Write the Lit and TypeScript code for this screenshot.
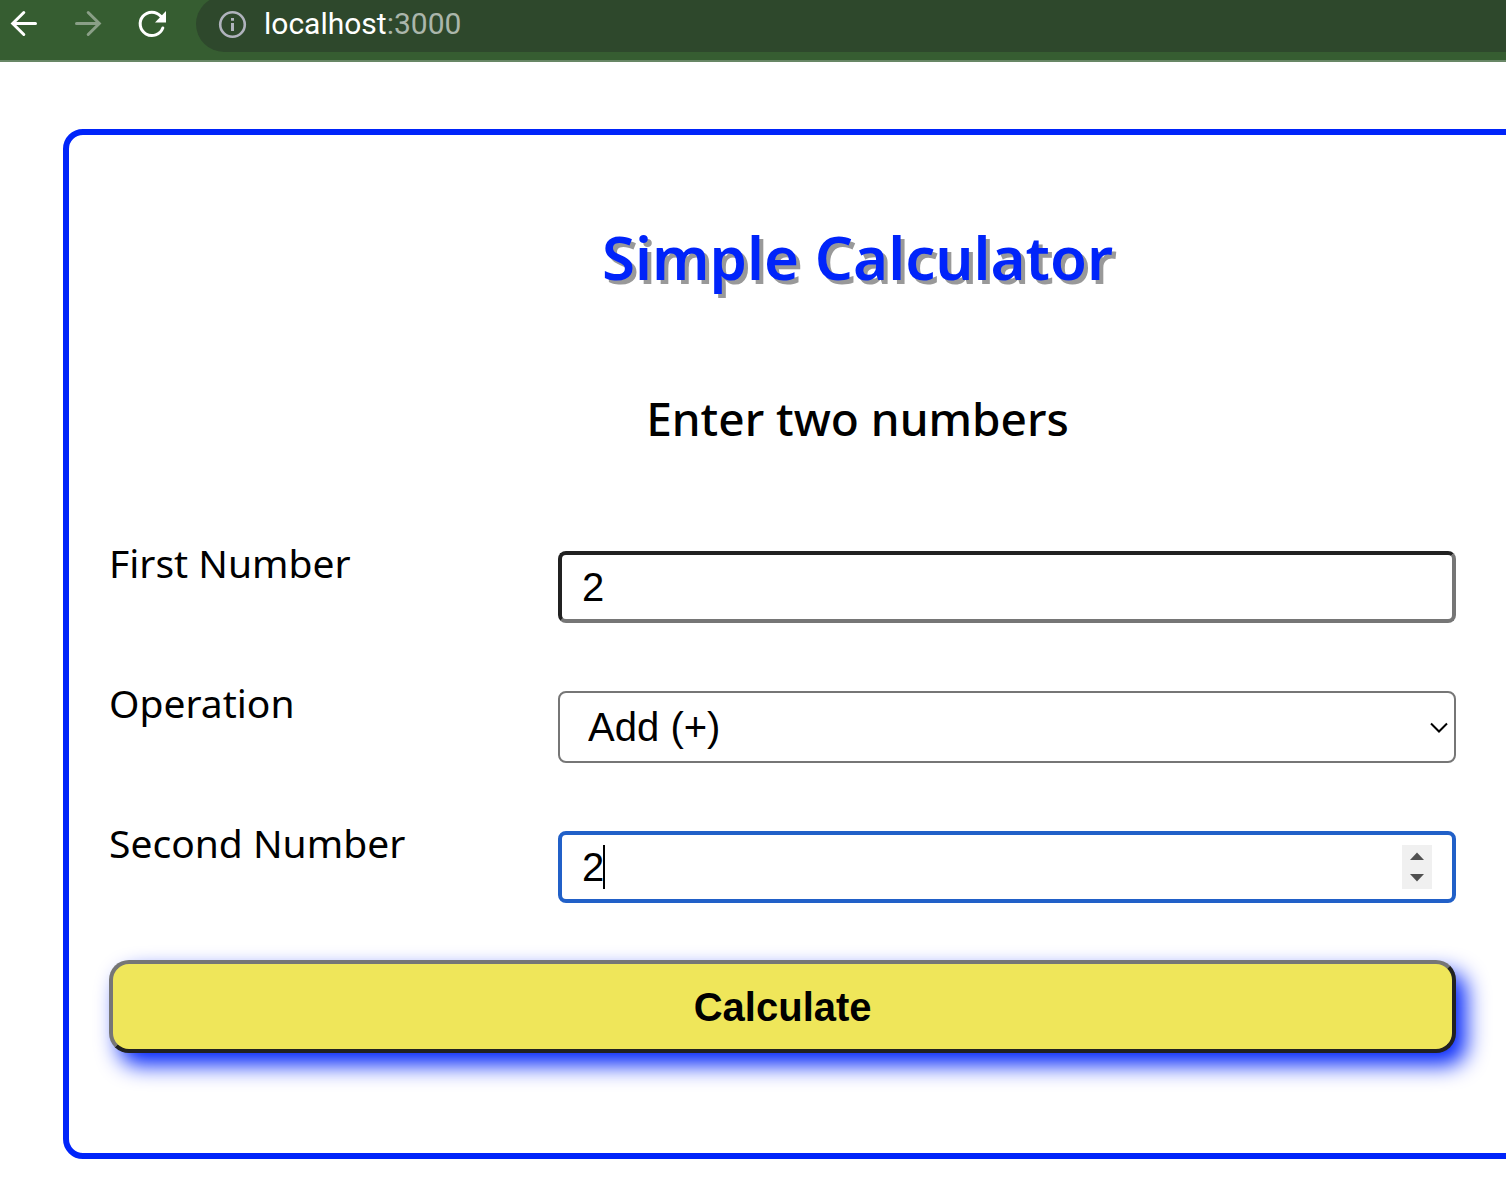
import { LitElement, html, css } from "lit";
import { customElement, state } from "lit/decorators.js";

@customElement("browser-bar")
class BrowserBar extends LitElement {
  static styles = css`
    :host {
      display: block;
    }
    .bar {
      display: flex;
      align-items: flex-start;
      height: 60px;
      overflow: hidden;
      background: #365d31;
      border-bottom: 2px solid #688766;
      box-sizing: content-box;
    }
    .nav {
      display: flex;
      flex: none;
      gap: 16px;
      width: 196px;
    }
    .nav-button {
      display: block;
      width: 48px;
      height: 48px;
      padding: 0;
      border: 0;
      background: none;
      color: #fff;
    }
    .nav-button:disabled {
      color: #8a9f87;
    }
    .icon {
      display: block;
      width: 48px;
      height: 48px;
    }
    .address {
      display: flex;
      flex: 1;
      align-items: center;
      gap: 16px;
      box-sizing: border-box;
      height: 56px;
      margin-top: -4px;
      padding-left: 20px;
      border-radius: 28px 0 0 28px;
      background: #2e482c;
    }
    .info {
      display: block;
      flex: none;
      width: 32px;
      height: 32px;
    }
    .url {
      color: #fff;
      font: 30px/32px Roboto, "Liberation Sans", sans-serif;
      text-decoration: none;
    }
    .port {
      color: #abb6ab;
    }
  `;

  render() {
    return html`
      <header class="bar">
        <nav class="nav" aria-label="History">
          <button class="nav-button" type="button" aria-label="Back">
            <svg class="icon" viewBox="0 0 48 48" fill="none" stroke="currentColor" stroke-width="3" stroke-linecap="round">
              <path d="M35.500 23.500H13M23.800 12.500L12.700 23.500L23.800 34.500" />
            </svg>
          </button>
          <button class="nav-button" type="button" aria-label="Forward" disabled>
            <svg class="icon" viewBox="0 0 48 48" fill="none" stroke="currentColor" stroke-width="3" stroke-linecap="round">
              <path d="M12.500 23.500H35M24.200 12.500L35.300 23.500L24.200 34.500" />
            </svg>
          </button>
          <button class="nav-button" type="button" aria-label="Reload">
            <svg class="icon" viewBox="0 0 48 48">
              <path
                d="M34.800 28A11.700 11.700 0 1 1 32.800 16.300"
                fill="none"
                stroke="currentColor"
                stroke-width="3"
                stroke-linecap="round"
              />
              <path d="M38 11V22.500H27Z" fill="currentColor" />
            </svg>
          </button>
        </nav>
        <div class="address">
          <svg class="info" viewBox="0 0 32 32" aria-hidden="true">
            <circle cx="16.500" cy="16.500" r="12.300" fill="none" stroke="#b0b3bd" stroke-width="2.600" />
            <path d="M16.500 15V23M16.500 10V12.800" stroke="#b0b3bd" stroke-width="3" />
          </svg>
          <a class="url" href="#">localhost<span class="port">:3000</span></a>
        </div>
      </header>
    `;
  }
}

@customElement("app-root")
class AppRoot extends LitElement {
  static styles = css`
    :host {
      display: block;
      min-height: 100vh;
      overflow: hidden;
      background: #fff;
      color: #000;
      font-family: "Noto Sans", "Open Sans", sans-serif;
    }
    .card {
      box-sizing: border-box;
      margin: 67px -146px 27px 63px;
      padding: 78px 40px 100px;
      border: 6px solid #0024fa;
      border-radius: 20px;
    }
    .title,
    .subtitle {
      margin: 0;
      text-align: center;
      font-weight: 600;
    }
    .title {
      color: #0024fa;
      font-size: 60px;
      line-height: 88px;
      text-shadow: 4px 4px 0 #999;
    }
    .subtitle {
      margin-top: 85px;
      font-size: 46px;
      line-height: 64px;
      font-weight: 500;
    }
    .form {
      width: 90%;
      margin-top: 87px;
    }
    .row {
      display: grid;
      grid-template-columns: 1fr 2fr;
      align-items: start;
      margin-bottom: 54px;
    }
    .row:last-of-type {
      margin-bottom: 57px;
    }
    .label {
      font-size: 39px;
      line-height: 52px;
    }
    .field {
      position: relative;
      margin-top: 14px;
      height: 72px;
    }
    .input,
    .select {
      display: block;
      box-sizing: border-box;
      width: 100%;
      height: 100%;
      margin: 0;
      padding: 0 20px;
      border: 4px solid;
      border-color: #212121 #767676 #767676 #212121;
      border-radius: 8px;
      background: #fff;
      color: #000;
      font: 40px/44px "Liberation Sans", Arial, sans-serif;
      outline: none;
      appearance: textfield;
    }
    .input::-webkit-inner-spin-button {
      appearance: none;
      margin: 0;
    }
    .input.active {
      border-color: #2160c8;
    }
    .select {
      padding: 0 28px;
      border: 2px solid #767676;
      appearance: none;
    }
    .chevron {
      position: absolute;
      top: 26px;
      right: 6px;
      width: 22px;
      height: 22px;
      pointer-events: none;
    }
    .caret {
      position: absolute;
      top: 14px;
      left: 45px;
      width: 2px;
      height: 44px;
      background: #000;
    }
    .spinner {
      position: absolute;
      top: 14px;
      right: 24px;
      display: flex;
      flex-direction: column;
      width: 30px;
      height: 44px;
      background: #f0f0f0;
    }
    .step {
      display: block;
      flex: 1;
      padding: 0;
      border: 0;
      background: none;
    }
    .arrow {
      display: block;
      width: 30px;
      height: 22px;
    }
    .submit {
      display: block;
      box-sizing: border-box;
      width: 100%;
      height: 93px;
      margin: 0;
      border: 4px solid;
      border-color: #767676 #212121 #212121 #767676;
      border-radius: 20px;
      background: #efe65a;
      color: #000;
      font: bold 40px/46px "Liberation Sans", Arial, sans-serif;
      box-shadow: 10px 12px 22px #0024fa;
    }
  `;

  @state() private second = 2;

  private step(delta: number) {
    this.second += delta;
  }

  render() {
    return html`
      <browser-bar></browser-bar>
      <main class="card">
        <h1 class="title">Simple Calculator</h1>
        <h2 class="subtitle">Enter two numbers</h2>
        <form class="form" @submit=${(e: Event) => e.preventDefault()}>
          <div class="row">
            <label class="label" for="first">First Number</label>
            <div class="field">
              <input class="input" id="first" type="number" value="2" />
            </div>
          </div>
          <div class="row">
            <label class="label" for="operation">Operation</label>
            <div class="field">
              <select class="select" id="operation">
                <option>Add (+)</option>
              </select>
              <svg class="chevron" viewBox="0 0 22 22" aria-hidden="true">
                <path d="M3 6.500L11 14.500L19 6.500" fill="none" stroke="#000" stroke-width="2" />
              </svg>
            </div>
          </div>
          <div class="row">
            <label class="label" for="second">Second Number</label>
            <div class="field">
              <input class="input active" id="second" type="number" .value=${String(this.second)} />
              <span class="caret"></span>
              <span class="spinner">
                <button class="step" type="button" aria-label="Increase" @click=${() => this.step(1)}>
                  <svg class="arrow" viewBox="0 0 30 22"><path d="M8 15L15 7.500L22 15Z" fill="#505050" /></svg>
                </button>
                <button class="step" type="button" aria-label="Decrease" @click=${() => this.step(-1)}>
                  <svg class="arrow" viewBox="0 0 30 22"><path d="M8 7L15 14.500L22 7Z" fill="#505050" /></svg>
                </button>
              </span>
            </div>
          </div>
          <button class="submit" type="submit">Calculate</button>
        </form>
      </main>
    `;
  }
}
